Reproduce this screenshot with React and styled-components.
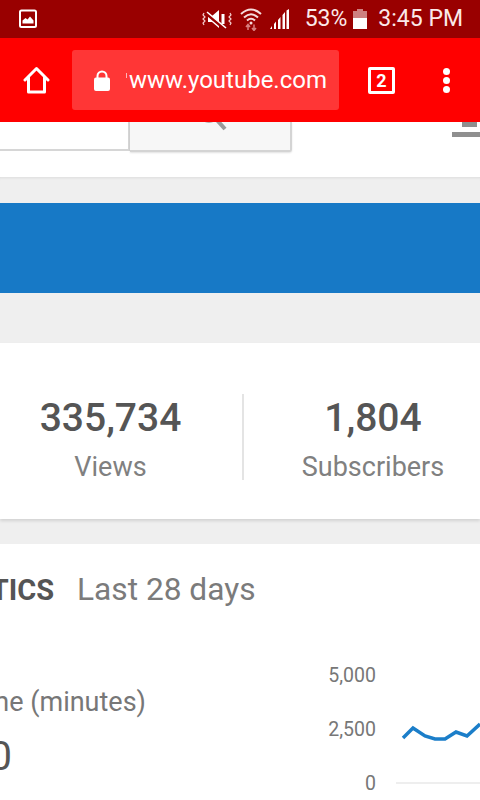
import React from "react";
import styled, { createGlobalStyle } from "styled-components";

const Global = createGlobalStyle`
  html, body { margin: 0; padding: 0; background: #fff; }
  * { box-sizing: border-box; }
`;

const Screen = styled.div`
  width: 480px;
  height: 800px;
  overflow: hidden;
  display: flex;
  flex-direction: column;
  font-family: Roboto, "Liberation Sans", sans-serif;
  background: #fff;
`;

const StatusBar = styled.div`
  height: 38px;
  flex: none;
  background: #990000;
  color: #fbe9e9;
  display: flex;
  align-items: center;
  padding: 0 17px 0 19px;
`;

const StatusLeft = styled.div`
  flex: 1;
  display: flex;
  align-items: center;
`;

const StatusIcons = styled.div`
  display: flex;
  align-items: center;
  gap: 8px;
`;

const StatusText = styled.span`
  font-size: 23px;
  line-height: 38px;
  margin-left: ${(p) => p.$ml || 0}px;
  margin-right: ${(p) => p.$mr || 0}px;
  white-space: nowrap;
`;

const Toolbar = styled.div`
  height: 84px;
  flex: none;
  background: #ff0000;
  display: flex;
  align-items: center;
  position: relative;
  z-index: 2;
  padding-left: 23px;
`;

const UrlPill = styled.div`
  width: 267px;
  height: 60px;
  margin-left: 22px;
  background: #ff3636;
  border-radius: 3px;
  display: flex;
  align-items: center;
  padding-left: 22px;
  color: #fff;
`;

const UrlTick = styled.span`
  width: 1px;
  height: 5px;
  margin: -9px 0 0 16px;
  background: #ffb5b5;
`;

const UrlText = styled.span`
  font-size: 24px;
  margin-left: 2px;
  white-space: nowrap;
`;

const TabBox = styled.div`
  width: 27px;
  height: 27px;
  margin-left: 29px;
  border: 3px solid #fff;
  border-radius: 2px;
  color: #fff;
  font-size: 18px;
  font-weight: 700;
  display: flex;
  align-items: center;
  justify-content: center;
`;

const Dots = styled.div`
  margin-left: 48px;
  display: flex;
  flex-direction: column;
  gap: 2px;
`;

const Dot = styled.span`
  width: 7px;
  height: 7px;
  border-radius: 50%;
  background: #fff;
`;

const SearchSection = styled.div`
  height: 55px;
  flex: none;
  display: flex;
  align-items: flex-start;
  overflow: hidden;
  position: relative;
  background: #fff;
`;

const SearchInput = styled.div`
  width: 130px;
  height: 29px;
  background: #fff;
  border-right: 2px solid #d6d6d6;
  border-bottom: 2px solid #d6d6d6;
`;

const SearchButton = styled.div`
  width: 162px;
  height: 30px;
  background: #f7f7f7;
  border-right: 2px solid #d4d4d4;
  border-bottom: 2px solid #d4d4d4;
  border-radius: 0 0 3px 0;
  box-shadow: 0 1px 2px rgba(0, 0, 0, 0.12);
  display: flex;
  justify-content: center;
  overflow: hidden;
`;

const MagnifierIcon = styled.svg`
  margin: -24px 0 0 3px;
  flex: none;
`;

const UploadGlyph = styled.svg`
  margin-left: auto;
  flex: none;
`;

const Gap = styled.div`
  height: ${(p) => p.$h}px;
  flex: none;
  background: #efefef;
  box-shadow: ${(p) => (p.$inset ? "inset 0 3px 3px -2px rgba(0,0,0,0.08)" : "none")};
`;

const Banner = styled.div`
  height: 90px;
  flex: none;
  background: #1779c6;
`;

const StatsCard = styled.div`
  height: 176px;
  flex: none;
  background: #fff;
  display: flex;
  align-items: center;
  position: relative;
  box-shadow: 0 2px 3px rgba(0, 0, 0, 0.12);
`;

const Stat = styled.div`
  width: ${(p) => p.$w}px;
  margin-left: ${(p) => p.$ml || 0}px;
  display: flex;
  flex-direction: column;
  align-items: center;
  margin-top: 15px;
`;

const StatValue = styled.div`
  font-size: 39px;
  line-height: 46px;
  font-weight: 500;
  color: #555;
`;

const StatLabel = styled.div`
  font-size: 27px;
  line-height: 32px;
  margin-top: 10px;
  color: #808080;
`;

const StatDivider = styled.div`
  width: 2px;
  height: 86px;
  margin: 12px 0 0 21px;
  background: #e4e4e4;
`;

const AnalyticsCard = styled.div`
  flex: 1;
  background: #fff;
  display: flex;
  flex-direction: column;
`;

const CardHeader = styled.div`
  display: flex;
  align-items: baseline;
  padding-top: 26px;
`;

const ClipRight = styled.div`
  width: ${(p) => p.$w}px;
  flex: none;
  display: flex;
  justify-content: flex-end;
  overflow: hidden;
  white-space: nowrap;
`;

const HeaderTitle = styled.span`
  font-size: 29px;
  line-height: 40px;
  font-weight: 700;
  color: #555;
`;

const HeaderRange = styled.span`
  font-size: 31.7px;
  line-height: 40px;
  margin-left: 23px;
  color: #7b7b7b;
`;

const MetricRow = styled.div`
  display: flex;
  justify-content: space-between;
  margin-top: 59px;
`;

const Metric = styled.div`
  display: flex;
  flex-direction: column;
  padding-top: 17px;
`;

const MetricLabel = styled.span`
  font-size: 27px;
  line-height: 32px;
  color: #777;
`;

const MetricValue = styled.span`
  font-size: 40px;
  line-height: 46px;
  margin-top: 16px;
  color: #555;
`;

const Chart = styled.div`
  width: 152px;
  position: relative;
  height: 140px;
  display: grid;
  grid-template-columns: 48px 1fr;
`;

const AxisLabels = styled.div`
  display: flex;
  flex-direction: column;
  justify-content: space-between;
  align-items: flex-end;
  height: 122px;
  width: 48px;
`;

const AxisLabel = styled.span`
  font-size: 19.5px;
  line-height: 14px;
  height: 14px;
  color: #777;
`;

const Plot = styled.svg`
  display: block;
`;

export default function App() {
  return (
    <Screen>
      <Global />
      <StatusBar>
        <StatusLeft>
          <svg width="18" height="20" viewBox="0 0 18 20">
            <rect x="1" y="1.5" width="16" height="16.5" rx="1.5" fill="none" stroke="#fff" strokeWidth="2" />
            <path d="M3.5 14.5 V11.5 L6.5 9 L8.5 10.5 L11 7.5 L14.5 11.5 V14.5 Z" fill="#fff" />
          </svg>
        </StatusLeft>
        <StatusIcons>
          <svg width="30" height="22" viewBox="0 0 30 22">
            <path d="M2 5 L1 7 L3 9 L1 11 L3 13 L1 15 L2 17" fill="none" stroke="#f3cccc" strokeWidth="1.2" />
            <path d="M28 5 L29 7 L27 9 L29 11 L27 13 L29 15 L28 17" fill="none" stroke="#f3cccc" strokeWidth="1.2" />
            <path d="M6 8 H10 L17 2 V20 L10 14 H6 Z" fill="#fff" />
            <path d="M21 6 V16" stroke="#fff" strokeWidth="3" />
            <path d="M5 6 L24 22" stroke="#990000" strokeWidth="3" />
            <path d="M5 4 L24 20" stroke="#fff" strokeWidth="1.6" />
          </svg>
          <svg width="22" height="23" viewBox="0 0 22 23">
            <path d="M1 6 Q11 -3 21 6" fill="none" stroke="#f6dcdc" strokeWidth="2" />
            <path d="M4 9.5 Q11 3 18 9.5" fill="none" stroke="#f6dcdc" strokeWidth="2" />
            <path d="M7 12.5 Q11 9 15 12.5" fill="none" stroke="#f6dcdc" strokeWidth="2" />
            <circle cx="11" cy="15" r="1.5" fill="#f6dcdc" />
            <path d="M8 22 V17 M6 19 L8 16.5 L10 19 M14 16.5 V22 M12 20 L14 22.5 L16 20" fill="none" stroke="#d98080" strokeWidth="1.5" />
          </svg>
          <svg width="20" height="21" viewBox="0 0 20 21">
            <path d="M0 20 L2 17 V20 Z M4 20 V15 L6 12.5 V20 Z M8 20 V11 L10.5 8 V20 Z M12.5 20 V6 L15 3 V20 Z M16.5 20 V1.5 L19 0 V20 Z" fill="#fff" />
          </svg>
          <StatusText $ml={7} $mr={-2}>53%</StatusText>
          <svg width="14" height="20" viewBox="0 0 14 20">
            <path d="M4 0 H10 V2 H14 V9 H0 V2 H4 Z" fill="#cf8080" />
            <rect y="9" width="14" height="11" fill="#fff" />
          </svg>
          <StatusText $ml={3}>3:45 PM</StatusText>
        </StatusIcons>
      </StatusBar>

      <Toolbar>
        <svg width="27" height="28" viewBox="0 0 27 28">
          <path d="M2 14 L13.5 2.5 L25 14 M5.5 11.5 V26 H21.5 V11.5" fill="none" stroke="#fff" strokeWidth="3" strokeLinecap="round" strokeLinejoin="round" />
        </svg>
        <UrlPill>
          <svg width="16" height="21" viewBox="0 0 16 21">
            <path d="M3.5 8 V6 A4.5 4.5 0 0 1 12.5 6 V8" fill="none" stroke="#fff" strokeWidth="2" />
            <rect y="7.5" width="16" height="13.5" rx="2" fill="#fff" />
          </svg>
          <UrlTick />
          <UrlText>www.youtube.com</UrlText>
        </UrlPill>
        <TabBox>2</TabBox>
        <Dots>
          <Dot />
          <Dot />
          <Dot />
        </Dots>
      </Toolbar>

      <SearchSection>
        <SearchInput />
        <SearchButton>
          <MagnifierIcon width="32" height="34" viewBox="0 0 32 34">
            <circle cx="13" cy="13" r="10" fill="none" stroke="#999" strokeWidth="3.5" />
            <path d="M20 21 L29 31" stroke="#999" strokeWidth="4" />
          </MagnifierIcon>
        </SearchButton>
        <UploadGlyph width="28" height="15" viewBox="0 0 28 15">
          <rect x="10" width="15" height="5" fill="#8f8f8f" />
          <rect y="10" width="28" height="5" fill="#8f8f8f" />
        </UploadGlyph>
      </SearchSection>

      <Gap $h={26} $inset />
      <Banner />
      <Gap $h={50} />

      <StatsCard>
        <Stat $w={221}>
          <StatValue>335,734</StatValue>
          <StatLabel>Views</StatLabel>
        </Stat>
        <StatDivider />
        <Stat $w={214} $ml={22}>
          <StatValue>1,804</StatValue>
          <StatLabel>Subscribers</StatLabel>
        </Stat>
      </StatsCard>

      <Gap $h={25} />

      <AnalyticsCard>
        <CardHeader>
          <ClipRight $w={54}>
            <HeaderTitle>ANALYTICS</HeaderTitle>
          </ClipRight>
          <HeaderRange>Last 28 days</HeaderRange>
        </CardHeader>
        <MetricRow>
          <Metric>
            <ClipRight $w={146}>
              <MetricLabel>Watch time (minutes)</MetricLabel>
            </ClipRight>
            <ClipRight $w={12}>
              <MetricValue>0</MetricValue>
            </ClipRight>
          </Metric>
          <Chart>
            <AxisLabels>
              <AxisLabel>5,000</AxisLabel>
              <AxisLabel>2,500</AxisLabel>
              <AxisLabel>0</AxisLabel>
            </AxisLabels>
            <Plot width="104" height="140" viewBox="328 669 104 140">
              <path d="M348 783 H480" stroke="#e8e8e8" strokeWidth="1.5" />
              <path d="M355 738 L365 728 L377 736 L387 739 L397 739 L408 732 L419 736 L432 724" fill="none" stroke="#1b7ec9" strokeWidth="3.5" />
            </Plot>
          </Chart>
        </MetricRow>
      </AnalyticsCard>
    </Screen>
  );
}
